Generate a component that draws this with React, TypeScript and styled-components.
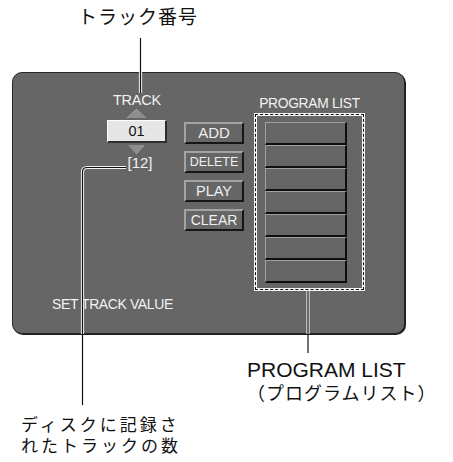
import React from "react";
import styled, { createGlobalStyle } from "styled-components";

const GlobalStyle = createGlobalStyle`
  html, body {
    margin: 0;
    padding: 0;
    background: #ffffff;
  }
  body {
    font-family: "Liberation Sans", "Noto Sans CJK JP", sans-serif;
  }
`;

const Page = styled.div`
  position: relative;
  width: 453px;
  height: 462px;
  display: flex;
  flex-direction: column;
  overflow: hidden;
  color: #111;
`;

const Caption = styled.div<{ $left: number; $top: number }>`
  margin-left: ${(p) => p.$left}px;
  margin-top: ${(p) => p.$top}px;
  font-family: "Noto Sans CJK JP", sans-serif;
  font-size: 19px;
  line-height: 24px;
  letter-spacing: 1px;
  white-space: nowrap;
`;

const Panel = styled.div`
  box-sizing: border-box;
  margin: 44px 0 0 12px;
  width: 393px;
  height: 262px;
  background: #666666;
  border: 1px solid #262626;
  border-radius: 10px;
  box-shadow: 1px 1px 0 #1c1c1c;
  display: flex;
  flex-direction: column;
  padding-top: 19px;
  color: #f2f2f2;
`;

const TopRow = styled.div`
  display: flex;
  align-items: flex-start;
  padding-left: 94px;
`;

const TrackColumn = styled.div`
  width: 60px;
  display: flex;
  flex-direction: column;
  align-items: center;
`;

const SmallLabel = styled.div<{ $size: number }>`
  font-size: ${(p) => p.$size}px;
  line-height: 16px;
  white-space: nowrap;
  letter-spacing: -0.2px;
`;

const Arrow = styled.svg<{ $gap: number }>`
  display: block;
  margin-top: ${(p) => p.$gap}px;
`;

const ValueBox = styled.div`
  box-sizing: border-box;
  margin-top: 2px;
  width: 60px;
  height: 23px;
  background: #e6e6e6;
  border-top: 1px solid #ffffff;
  border-left: 1px solid #ffffff;
  border-right: 2px solid #2e2e2e;
  border-bottom: 2px solid #2e2e2e;
  color: #111;
  font-size: 14.5px;
  line-height: 20px;
  text-align: center;
`;

const Count = styled.div`
  font-size: 15px;
  line-height: 16px;
  padding-left: 6px;
`;

const ButtonColumn = styled.div`
  margin: 30px 0 0 17px;
  display: flex;
  flex-direction: column;
  gap: 7px;
`;

const PanelButton = styled.div<{ $size: number }>`
  box-sizing: border-box;
  width: 60px;
  height: 22px;
  background: #666666;
  border-top: 2px solid #a3a3a3;
  border-left: 2px solid #a3a3a3;
  border-right: 2px solid #161616;
  border-bottom: 2px solid #161616;
  font-size: ${(p) => p.$size}px;
  line-height: 18px;
  text-align: center;
  color: #f0f0f0;
`;

const ProgramColumn = styled.div`
  margin: 4px 0 0 10px;
  width: 111px;
  display: flex;
  flex-direction: column;
`;

const ProgramLabel = styled.div`
  font-size: 13.8px;
  line-height: 15px;
  text-align: center;
  letter-spacing: -0.3px;
  white-space: nowrap;
`;

const ProgramBox = styled.div`
  position: relative;
  box-sizing: border-box;
  margin-top: 2px;
  width: 111px;
  height: 178px;
  border: 3px solid #f4f4f4;
  padding: 6px 0 0 8px;
  display: flex;
  flex-direction: column;

  &::before {
    content: "";
    position: absolute;
    inset: -2px;
    border: 1px dashed #111;
    pointer-events: none;
  }
`;

const Slot = styled.div`
  box-sizing: border-box;
  width: 82px;
  height: 23px;
  background: #656565;
  border-top: 1px solid #a0a0a0;
  border-left: 1px solid #a0a0a0;
  border-right: 2px solid #0e0e0e;
  border-bottom: 2px solid #0e0e0e;
`;

const Footer = styled.div`
  margin-top: auto;
  padding: 0 0 21px 39px;
  font-size: 14px;
  line-height: 16px;
  letter-spacing: -0.4px;
`;

const ProgramCallout = styled.div`
  margin: 24px 0 0 247px;
  display: flex;
  flex-direction: column;
`;

const CalloutTitle = styled.div`
  font-size: 21px;
  line-height: 24px;
  white-space: nowrap;
`;

const CalloutSub = styled.div`
  font-family: "Noto Sans CJK JP", sans-serif;
  font-size: 18px;
  line-height: 20px;
  letter-spacing: 1px;
  white-space: nowrap;
`;

const DiscCallout = styled.div`
  margin: 11px 0 0 21px;
  display: flex;
  flex-direction: column;
`;

const DiscLine = styled.div`
  font-family: "Noto Sans CJK JP", sans-serif;
  font-size: 17px;
  line-height: 21px;
  height: 21px;
  letter-spacing: 3px;
  white-space: nowrap;
`;

const Leaders = styled.svg`
  position: absolute;
  left: 0;
  top: 0;
  pointer-events: none;
`;

const ArrowUp = () => (
  <Arrow $gap={1} width="20" height="9" viewBox="0 0 20 9">
    <polygon points="10,0 20,9 0,9" fill="#8e8e8e" />
    <polyline points="0,9 10,0" stroke="#a8a8a8" strokeWidth="1" fill="none" />
  </Arrow>
);

const ArrowDown = () => (
  <Arrow $gap={2} width="18" height="10" viewBox="0 0 18 10">
    <polygon points="0,0 18,0 9,10" fill="#8e8e8e" />
    <polyline points="18,0 9,10" stroke="#5a5a5a" strokeWidth="1" fill="none" />
  </Arrow>
);

const buttons = [
  { label: "ADD", size: 15 },
  { label: "DELETE", size: 12.5 },
  { label: "PLAY", size: 14.5 },
  { label: "CLEAR", size: 14 },
];

export default function App() {
  return (
    <>
      <GlobalStyle />
      <Page>
        <Caption $left={78} $top={4}>
          トラック番号
        </Caption>

        <Panel>
          <TopRow>
            <TrackColumn>
              <SmallLabel $size={14.5}>TRACK</SmallLabel>
              <ArrowUp />
              <ValueBox>01</ValueBox>
              <ArrowDown />
              <Count>[12]</Count>
            </TrackColumn>

            <ButtonColumn>
              {buttons.map((b) => (
                <PanelButton key={b.label} $size={b.size}>
                  {b.label}
                </PanelButton>
              ))}
            </ButtonColumn>

            <ProgramColumn>
              <ProgramLabel>PROGRAM LIST</ProgramLabel>
              <ProgramBox>
                {Array.from({ length: 7 }).map((_, i) => (
                  <Slot key={i} />
                ))}
              </ProgramBox>
            </ProgramColumn>
          </TopRow>
          <Footer>SET TRACK VALUE</Footer>
        </Panel>

        <ProgramCallout>
          <CalloutTitle>PROGRAM LIST</CalloutTitle>
          <CalloutSub>（プログラムリスト）</CalloutSub>
        </ProgramCallout>

        <DiscCallout>
          <DiscLine>ディスクに記録さ</DiscLine>
          <DiscLine>れたトラックの数</DiscLine>
        </DiscCallout>

        <Leaders width="453" height="462" viewBox="0 0 453 462">
          <g stroke="#f4f4f4" strokeWidth="3.2" fill="none">
            <line x1="140.5" y1="72" x2="140.5" y2="93" />
            <path d="M126 167.5 H87 Q82.5 167.5 82.5 172 V334" />
            <line x1="308" y1="291" x2="308" y2="334" />
          </g>
          <g stroke="#111" strokeWidth="1.2" fill="none">
            <line x1="140.5" y1="38" x2="140.5" y2="93" />
            <path d="M126 167.5 H87 Q82.5 167.5 82.5 172 V405" />
            <line x1="308" y1="291" x2="308" y2="353" />
          </g>
        </Leaders>
      </Page>
    </>
  );
}
